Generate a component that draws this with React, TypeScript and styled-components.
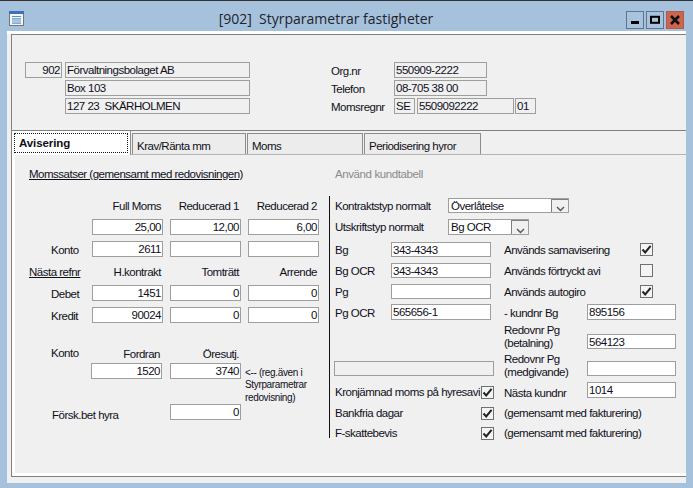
import React from 'react'
import styled, { createGlobalStyle } from 'styled-components'

const Global = createGlobalStyle`
  html, body { margin: 0; padding: 0; background: #a6c1dc; }
  body {
    font-family: "Liberation Sans", Arial, sans-serif;
    font-size: 11.5px;
    letter-spacing: -0.5px;
    color: #0f0f1a;
  }
`

const Win = styled.div`
  width: 693px;
  height: 488px;
  box-sizing: border-box;
  background: #a6c1dc;
  border-top: 1px solid #333;
  display: flex;
  flex-direction: column;
  overflow: hidden;
`
const TitleBar = styled.div`
  height: 30px;
  flex: none;
  display: flex;
  justify-content: space-between;
  align-items: center;
  padding: 0 9px;
`
const Title = styled.div`
  font-family: "Open Sans", sans-serif;
  font-size: 14px;
  letter-spacing: 0;
  color: #20242c;
  white-space: pre;
  margin: 5px 0 0 2px;
`
const WinButtons = styled.div`
  display: flex;
  gap: 2px;
  margin-top: 7px;
`
const WinButton = styled.div<{ $close?: boolean }>`
  width: 18px;
  height: 18px;
  box-sizing: border-box;
  border: 1px solid ${(p) => (p.$close ? '#b05a48' : '#5d7590')};
  background: ${(p) => (p.$close ? '#cc644f' : '#a9c3dd')};
  display: flex;
  align-items: center;
  justify-content: center;
`
const Client = styled.div`
  flex: 1;
  margin: 0 7px 5px;
  padding: 3px 0 0 4px;
  background: linear-gradient(#fff, #fff) top / 100% 3px no-repeat, #f0f0f0;
  display: flex;
  flex-direction: column;
`
const Frame = styled.div`
  height: 443px;
  box-sizing: border-box;
  border: 1px solid #808080;
  border-right: none;
  display: flex;
  flex-direction: column;
`
const Head = styled.div`
  height: 96px;
  flex: none;
  box-sizing: border-box;
  padding: 27px 0 0 13px;
  border-bottom: 1px solid #808080;
  display: flex;
`
const HeadLeft = styled.div`
  width: 306px;
  display: flex;
  flex-direction: column;
  gap: 2px;
`
const HeadRight = styled.div`
  display: flex;
  flex-direction: column;
  gap: 2px;
`
const Row = styled.div<{ $h?: number; $mt?: number; $end?: boolean }>`
  display: flex;
  align-items: ${(p) => (p.$end ? 'flex-end' : 'center')};
  height: ${(p) => p.$h ?? 16}px;
  margin-top: ${(p) => p.$mt ?? 0}px;
`
const Label = styled.div<{ $w?: number; $right?: boolean; $pl?: number; $under?: boolean; $top?: number; $mb?: number }>`
  flex: none;
  width: ${(p) => (p.$w ? `${p.$w}px` : 'auto')};
  box-sizing: border-box;
  padding-left: ${(p) => p.$pl ?? 0}px;
  padding-right: ${(p) => (p.$right ? 2 : 0)}px;
  margin-top: ${(p) => p.$top ?? 2}px;
  margin-bottom: ${(p) => p.$mb ?? 0}px;
  text-align: ${(p) => (p.$right ? 'right' : 'left')};
  text-decoration: ${(p) => (p.$under ? 'underline' : 'none')};
  white-space: pre;
  line-height: 13px;
`
const Field = styled.div<{ $w: number; $h?: number; $ro?: boolean; $right?: boolean; $ml?: number; $mr?: number; $mb?: number }>`
  flex: none;
  width: ${(p) => p.$w}px;
  height: ${(p) => p.$h ?? 16}px;
  box-sizing: border-box;
  margin-left: ${(p) => p.$ml ?? 0}px;
  margin-right: ${(p) => p.$mr ?? 0}px;
  margin-bottom: ${(p) => p.$mb ?? 0}px;
  padding: 1px 1px 0;
  border: 1px solid #9e9e9e;
  background: ${(p) => (p.$ro ? '#f0f0f0' : '#fff')};
  text-align: ${(p) => (p.$right ? 'right' : 'left')};
  line-height: 13px;
  white-space: pre;
  overflow: hidden;
`
const Tabs = styled.div`
  height: 24px;
  flex: none;
  display: flex;
  align-items: flex-end;
  gap: 1px;
  box-sizing: border-box;
  border-bottom: 1px solid #b4b4b4;
`
const Tab = styled.div<{ $w: number }>`
  width: ${(p) => p.$w}px;
  height: 21px;
  box-sizing: border-box;
  border: 1px solid #8c8c8c;
  border-bottom: none;
  background: #ececec;
  padding: 5px 0 0 4px;
  line-height: 14px;
`
const ActiveTab = styled.div`
  width: 119px;
  height: 24px;
  margin-bottom: -1px;
  box-sizing: border-box;
  background: #fff;
  border-right: 1px solid #8c8c8c;
  padding: 2px;
`
const Focus = styled.div`
  height: 100%;
  box-sizing: border-box;
  border: 1px dotted #111;
  font-weight: 700;
  letter-spacing: -0.1px;
  padding: 2px 0 0 4px;
  line-height: 15px;
`
const Page = styled.div`
  flex: 1;
  margin-left: 0;
  border-left: 3px solid #fff;
  border-bottom: 3px solid #fff;
  padding-top: 11px;
  background: #f0f0f0;
`
const Heading = styled.div`
  display: flex;
  height: 16px;
  align-items: center;
  padding-left: 14px;
  margin-bottom: 14px;
`
const Columns = styled.div`
  display: flex;
  align-items: flex-start;
`
const LeftCol = styled.div`
  width: 314px;
  flex: none;
  box-sizing: border-box;
  padding-left: 14px;
`
const RightCol = styled.div`
  height: 242px;
  box-sizing: border-box;
  border-left: 1px solid #111;
  padding: 2px 0 0 5px;
`
const Note = styled.div`
  flex: none;
  margin: 4px 0 0 4px;
  align-self: flex-start;
  font-size: 10px;
  letter-spacing: -0.35px;
  line-height: 12.3px;
  white-space: pre;
`
const Grey = styled.span`
  color: #8a8a8a;
  letter-spacing: -0.4px;
`
const ComboBox = styled.div<{ $w: number; $h?: number }>`
  width: ${(p) => p.$w}px;
  height: ${(p) => p.$h ?? 15}px;
  flex: none;
  box-sizing: border-box;
  border: 1px solid #9e9e9e;
  background: #fff;
  padding: 1px 0 0 2px;
  display: flex;
  justify-content: space-between;
  line-height: 13px;
`
const ComboArrow = styled.div`
  width: 17px;
  height: calc(100% + 1px);
  margin-top: -1px;
  box-sizing: border-box;
  border: 1px solid #808080;
  border-width: 1px 0 0 1px;
  background: #f0f0f0;
  display: flex;
  align-items: flex-end;
  justify-content: center;
`
const CheckBox = styled.div<{ $ml?: number; $mt?: number }>`
  width: 13px;
  height: 13px;
  flex: none;
  box-sizing: border-box;
  margin-left: ${(p) => p.$ml ?? 0}px;
  margin-top: ${(p) => p.$mt ?? 0}px;
  border: 1px solid #707070;
  background: #f4f4f4;
  display: flex;
  align-items: center;
  justify-content: center;
`

const FormIcon = () => (
  <svg width="15" height="15" viewBox="0 0 15 15" style={{ marginTop: 5 }}>
    <rect x="0.5" y="0.5" width="14" height="14" fill="#f2f6fb" stroke="#6f7a70" />
    <rect x="0" y="0" width="15" height="3" fill="#3f6fb4" />
    <path d="M3 5.5h9M3 7.8h9M3 10h9M3 12.2h9" stroke="#5f8fc7" strokeWidth="1.2" />
  </svg>
)

const Check = () => (
  <svg width="11" height="11" viewBox="0 0 11 11">
    <path d="M1.5 5.5 L4.2 8.4 L9.6 1.8" fill="none" stroke="#222" strokeWidth="2" />
  </svg>
)

const Chevron = () => (
  <svg width="9" height="6" viewBox="0 0 9 6">
    <path d="M1 1 L4.5 4.5 L8 1" fill="none" stroke="#555" strokeWidth="1.4" />
  </svg>
)

function App() {
  return (
    <Win>
      <Global />
      <TitleBar>
        <FormIcon />
        <Title>{'[902]  Styrparametrar fastigheter'}</Title>
        <WinButtons>
          <WinButton>
            <svg width="10" height="10" viewBox="0 0 10 10">
              <rect x="1" y="6" width="8" height="3" fill="#000" />
            </svg>
          </WinButton>
          <WinButton>
            <svg width="10" height="10" viewBox="0 0 10 10">
              <rect x="1" y="1.8" width="8" height="6" fill="none" stroke="#000" strokeWidth="2" />
            </svg>
          </WinButton>
          <WinButton $close>
            <svg width="12" height="10" viewBox="0 0 12 10">
              <path d="M2 1 L10 9 M10 1 L2 9" stroke="#111" strokeWidth="2.6" />
            </svg>
          </WinButton>
        </WinButtons>
      </TitleBar>
      <Client>
        <Frame>
          <Head>
            <HeadLeft>
              <Row>
                <Field $w={37} $ro $right>902</Field>
                <Field $w={185} $ro $ml={3}>Förvaltningsbolaget AB</Field>
              </Row>
              <Row>
                <Field $w={185} $ro $ml={40}>Box 103</Field>
              </Row>
              <Row>
                <Field $w={185} $ro $ml={40}>{'127 23  SKÄRHOLMEN'}</Field>
              </Row>
            </HeadLeft>
            <HeadRight>
              <Row>
                <Label $w={63}>Org.nr</Label>
                <Field $w={93} $ro>550909-2222</Field>
              </Row>
              <Row>
                <Label $w={63}>Telefon</Label>
                <Field $w={93} $ro>08-705 38 00</Field>
              </Row>
              <Row>
                <Label $w={63}>Momsregnr</Label>
                <Field $w={21} $ro>SE</Field>
                <Field $w={97} $ro $ml={2}>5509092222</Field>
                <Field $w={21} $ro $ml={1}>01</Field>
              </Row>
            </HeadRight>
          </Head>
          <Tabs>
            <ActiveTab>
              <Focus>Avisering</Focus>
            </ActiveTab>
            <Tab $w={114}>Krav/Ränta mm</Tab>
            <Tab $w={116}>Moms</Tab>
            <Tab $w={117}>Periodisering hyror</Tab>
          </Tabs>
          <Page>
            <Heading>
              <Label $w={306} $under $top={0}>Momssatser (gemensamt med redovisningen)</Label>
              <Grey>Använd kundtabell</Grey>
            </Heading>
            <Columns>
              <LeftCol>
                <Row $h={18}>
                  <Label $w={63} />
                  <Label $w={71} $right>Full Moms</Label>
                  <Label $w={78} $right>Reducerad 1</Label>
                  <Label $w={78} $right>Reducerad 2</Label>
                </Row>
                <Row $mt={5}>
                  <Label $w={63} />
                  <Field $w={71} $right $mr={7}>25,00</Field>
                  <Field $w={71} $right $mr={7}>12,00</Field>
                  <Field $w={71} $right>6,00</Field>
                </Row>
                <Row $mt={6}>
                  <Label $w={63} $pl={22}>Konto</Label>
                  <Field $w={71} $right $mr={7}>2611</Field>
                  <Field $w={71} $mr={7} />
                  <Field $w={71} />
                </Row>
                <Row $mt={7} $h={14}>
                  <Label $w={63} $under>Nästa refnr</Label>
                  <Label $w={71} $right>H.kontrakt</Label>
                  <Label $w={78} $right>Tomträtt</Label>
                  <Label $w={78} $right>Arrende</Label>
                </Row>
                <Row $mt={7}>
                  <Label $w={63} $pl={22}>Debet</Label>
                  <Field $w={71} $right $mr={7}>1451</Field>
                  <Field $w={71} $right $mr={7}>0</Field>
                  <Field $w={71} $right>0</Field>
                </Row>
                <Row $mt={6}>
                  <Label $w={63} $pl={22}>Kredit</Label>
                  <Field $w={71} $right $mr={7}>90024</Field>
                  <Field $w={71} $right $mr={7}>0</Field>
                  <Field $w={71} $right>0</Field>
                </Row>
                <Row $mt={22}>
                  <Label $w={63} $pl={22} $top={0}>Konto</Label>
                  <Label $w={70} $right>Fordran</Label>
                  <Label $w={79} $right>Öresutj.</Label>
                </Row>
                <Row $mt={2}>
                  <Field $w={71} $right $ml={62} $mr={8}>1520</Field>
                  <Field $w={71} $right>3740</Field>
                  <Note>{'<-- (reg.även i\nStyrparametrar\nredovisning)'}</Note>
                </Row>
                <Row $mt={25}>
                  <Label $w={141} $pl={23} $top={6}>Försk.bet hyra</Label>
                  <Field $w={71} $right>0</Field>
                </Row>
              </LeftCol>
              <RightCol>
                <Row $h={15}>
                  <Label $w={113}>Kontraktstyp normalt</Label>
                  <ComboBox $w={121}>
                    Överlåtelse
                    <ComboArrow><Chevron /></ComboArrow>
                  </ComboBox>
                </Row>
                <Row $mt={6}>
                  <Label $w={113} $top={0}>Utskriftstyp normalt</Label>
                  <ComboBox $w={81} $h={16}>
                    Bg OCR
                    <ComboArrow><Chevron /></ComboArrow>
                  </ComboBox>
                </Row>
                <Row $mt={7} $h={15}>
                  <Label $w={56}>Bg</Label>
                  <Field $w={100} $h={15} $mr={13}>343-4343</Field>
                  <Label $w={136}>Används samavisering</Label>
                  <CheckBox><Check /></CheckBox>
                </Row>
                <Row $mt={6} $h={15}>
                  <Label $w={56}>Bg OCR</Label>
                  <Field $w={100} $h={15} $mr={13}>343-4343</Field>
                  <Label $w={136}>Används förtryckt avi</Label>
                  <CheckBox />
                </Row>
                <Row $mt={6} $h={15}>
                  <Label $w={56}>Pg</Label>
                  <Field $w={100} $h={15} $mr={13} />
                  <Label $w={136}>Används autogiro</Label>
                  <CheckBox><Check /></CheckBox>
                </Row>
                <Row $mt={5}>
                  <Label $w={56}>Pg OCR</Label>
                  <Field $w={100} $mr={13}>565656-1</Field>
                  <Label $w={83}>- kundnr Bg</Label>
                  <Field $w={89}>895156</Field>
                </Row>
                <Row $mt={3} $h={26} $end>
                  <Label $w={169} />
                  <Label $w={83} $mb={-1}>{'Redovnr Pg\n(betalning)'}</Label>
                  <Field $w={89} $h={15}>564123</Field>
                </Row>
                <Row $mt={2} $h={26} $end>
                  <Field $w={160} $h={15} $ro $ml={-1} $mr={10} $mb={1} />
                  <Label $w={83} $mb={-2}>{'Redovnr Pg\n(medgivande)'}</Label>
                  <Field $w={89} $h={15} $mb={1} />
                </Row>
                <Row $mt={5}>
                  <Label $w={146} $top={5}>Kronjämnad moms på hyresavi</Label>
                  <CheckBox $mt={5}><Check /></CheckBox>
                  <Label $w={93} $pl={10} $top={6}>Nästa kundnr</Label>
                  <Field $w={89}>1014</Field>
                </Row>
                <Row $mt={7}>
                  <Label $w={146} $top={0}>Bankfria dagar</Label>
                  <CheckBox><Check /></CheckBox>
                  <Label $pl={10} $top={0}>(gemensamt med fakturering)</Label>
                </Row>
                <Row $mt={4}>
                  <Label $w={146} $top={0}>F-skattebevis</Label>
                  <CheckBox><Check /></CheckBox>
                  <Label $pl={10} $top={0}>(gemensamt med fakturering)</Label>
                </Row>
              </RightCol>
            </Columns>
          </Page>
        </Frame>
      </Client>
    </Win>
  )
}

export default App
